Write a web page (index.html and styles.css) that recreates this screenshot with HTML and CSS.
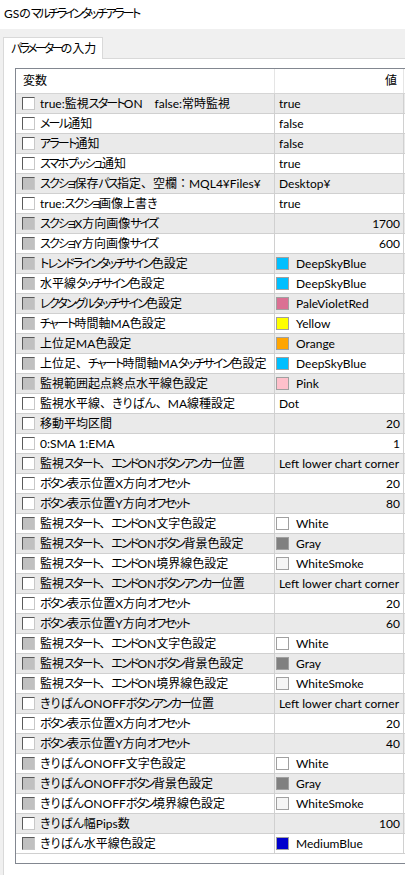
FILE: index.html
```html
<!DOCTYPE html>
<html lang="ja">
<head>
<meta charset="utf-8">
<title>GSのマルチラインタッチアラート</title>
<link rel="stylesheet" href="styles.css">
</head>
<body>
<div class="titlebar">GSの<span class="k">マルチラインタッチアラート</span></div>
<div class="tabstrip">
  <div class="tab"><span class="k">パラメーター</span>の入力</div>
  <div class="tabfill"></div>
</div>
<div class="panel">
  <div class="list">
    <div class="head">
      <div class="hname">変数</div>
      <div class="hval">値</div>
    </div>
    <div class="row odd"><div class="name"><span class="cb"></span><span class="lbl">true:監視<span class="k">スタート</span>ON　false:常時監視</span></div><div class="val">true</div></div>
    <div class="row"><div class="name"><span class="cb"></span><span class="lbl"><span class="k">メール</span>通知</span></div><div class="val">false</div></div>
    <div class="row odd"><div class="name"><span class="cb"></span><span class="lbl"><span class="k">アラート</span>通知</span></div><div class="val">false</div></div>
    <div class="row"><div class="name"><span class="cb"></span><span class="lbl"><span class="k">スマホプッシュ</span>通知</span></div><div class="val">true</div></div>
    <div class="row odd"><div class="name"><span class="cb g"></span><span class="lbl"><span class="k">スクショ</span>保存<span class="k">パス</span>指定<span class="fw">、</span>空欄<span class="fw">：</span>MQL4¥Files¥</span></div><div class="val">Desktop¥</div></div>
    <div class="row"><div class="name"><span class="cb"></span><span class="lbl">true:<span class="k">スクショ</span>画像上書き</span></div><div class="val">true</div></div>
    <div class="row odd"><div class="name"><span class="cb g"></span><span class="lbl"><span class="k">スクショ</span>X方向画像<span class="k">サイズ</span></span></div><div class="val num">1700</div></div>
    <div class="row"><div class="name"><span class="cb g"></span><span class="lbl"><span class="k">スクショ</span>Y方向画像<span class="k">サイズ</span></span></div><div class="val num">600</div></div>
    <div class="row odd"><div class="name"><span class="cb g"></span><span class="lbl"><span class="k">トレンドラインタッチサイン</span>色設定</span></div><div class="val"><span class="sw c-dsb"></span>DeepSkyBlue</div></div>
    <div class="row"><div class="name"><span class="cb g"></span><span class="lbl">水平線<span class="k">タッチサイン</span>色設定</span></div><div class="val"><span class="sw c-dsb"></span>DeepSkyBlue</div></div>
    <div class="row odd"><div class="name"><span class="cb g"></span><span class="lbl"><span class="k">レクタングルタッチサイン</span>色設定</span></div><div class="val"><span class="sw c-pvr"></span>PaleVioletRed</div></div>
    <div class="row"><div class="name"><span class="cb g"></span><span class="lbl"><span class="k">チャート</span>時間軸MA色設定</span></div><div class="val"><span class="sw c-yel"></span>Yellow</div></div>
    <div class="row odd"><div class="name"><span class="cb g"></span><span class="lbl">上位足MA色設定</span></div><div class="val"><span class="sw c-org"></span>Orange</div></div>
    <div class="row"><div class="name"><span class="cb g"></span><span class="lbl">上位足<span class="fw">、</span><span class="k">チャート</span>時間軸MA<span class="k">タッチサイン</span>色設定</span></div><div class="val"><span class="sw c-dsb"></span>DeepSkyBlue</div></div>
    <div class="row odd"><div class="name"><span class="cb g"></span><span class="lbl">監視範囲起点終点水平線色設定</span></div><div class="val"><span class="sw c-pnk"></span>Pink</div></div>
    <div class="row"><div class="name"><span class="cb"></span><span class="lbl">監視水平線<span class="fw">、</span>きりばん<span class="fw">、</span>MA線種設定</span></div><div class="val">Dot</div></div>
    <div class="row odd"><div class="name"><span class="cb"></span><span class="lbl">移動平均区間</span></div><div class="val num">20</div></div>
    <div class="row"><div class="name"><span class="cb"></span><span class="lbl">0:SMA 1:EMA</span></div><div class="val num">1</div></div>
    <div class="row odd"><div class="name"><span class="cb"></span><span class="lbl">監視<span class="k">スタート</span><span class="fw">、</span><span class="k">エンド</span>ON<span class="k">ボタンアンカー</span>位置</span></div><div class="val">Left lower chart corner</div></div>
    <div class="row"><div class="name"><span class="cb"></span><span class="lbl"><span class="k">ボタン</span>表示位置X方向<span class="k">オフセット</span></span></div><div class="val num">20</div></div>
    <div class="row odd"><div class="name"><span class="cb"></span><span class="lbl"><span class="k">ボタン</span>表示位置Y方向<span class="k">オフセット</span></span></div><div class="val num">80</div></div>
    <div class="row"><div class="name"><span class="cb g"></span><span class="lbl">監視<span class="k">スタート</span><span class="fw">、</span><span class="k">エンド</span>ON文字色設定</span></div><div class="val"><span class="sw c-wht"></span>White</div></div>
    <div class="row odd"><div class="name"><span class="cb g"></span><span class="lbl">監視<span class="k">スタート</span><span class="fw">、</span><span class="k">エンド</span>ON<span class="k">ボタン</span>背景色設定</span></div><div class="val"><span class="sw c-gry"></span>Gray</div></div>
    <div class="row"><div class="name"><span class="cb g"></span><span class="lbl">監視<span class="k">スタート</span><span class="fw">、</span><span class="k">エンド</span>ON境界線色設定</span></div><div class="val"><span class="sw c-ws"></span>WhiteSmoke</div></div>
    <div class="row odd"><div class="name"><span class="cb"></span><span class="lbl">監視<span class="k">スタート</span><span class="fw">、</span><span class="k">エンド</span>ON<span class="k">ボタンアンカー</span>位置</span></div><div class="val">Left lower chart corner</div></div>
    <div class="row"><div class="name"><span class="cb"></span><span class="lbl"><span class="k">ボタン</span>表示位置X方向<span class="k">オフセット</span></span></div><div class="val num">20</div></div>
    <div class="row odd"><div class="name"><span class="cb"></span><span class="lbl"><span class="k">ボタン</span>表示位置Y方向<span class="k">オフセット</span></span></div><div class="val num">60</div></div>
    <div class="row"><div class="name"><span class="cb g"></span><span class="lbl">監視<span class="k">スタート</span><span class="fw">、</span><span class="k">エンド</span>ON文字色設定</span></div><div class="val"><span class="sw c-wht"></span>White</div></div>
    <div class="row odd"><div class="name"><span class="cb g"></span><span class="lbl">監視<span class="k">スタート</span><span class="fw">、</span><span class="k">エンド</span>ON<span class="k">ボタン</span>背景色設定</span></div><div class="val"><span class="sw c-gry"></span>Gray</div></div>
    <div class="row"><div class="name"><span class="cb g"></span><span class="lbl">監視<span class="k">スタート</span><span class="fw">、</span><span class="k">エンド</span>ON境界線色設定</span></div><div class="val"><span class="sw c-ws"></span>WhiteSmoke</div></div>
    <div class="row odd"><div class="name"><span class="cb"></span><span class="lbl">きりばんONOFF<span class="k">ボタンアンカー</span>位置</span></div><div class="val">Left lower chart corner</div></div>
    <div class="row"><div class="name"><span class="cb"></span><span class="lbl"><span class="k">ボタン</span>表示位置X方向<span class="k">オフセット</span></span></div><div class="val num">20</div></div>
    <div class="row odd"><div class="name"><span class="cb"></span><span class="lbl"><span class="k">ボタン</span>表示位置Y方向<span class="k">オフセット</span></span></div><div class="val num">40</div></div>
    <div class="row"><div class="name"><span class="cb g"></span><span class="lbl">きりばんONOFF文字色設定</span></div><div class="val"><span class="sw c-wht"></span>White</div></div>
    <div class="row odd"><div class="name"><span class="cb g"></span><span class="lbl">きりばんONOFF<span class="k">ボタン</span>背景色設定</span></div><div class="val"><span class="sw c-gry"></span>Gray</div></div>
    <div class="row"><div class="name"><span class="cb g"></span><span class="lbl">きりばんONOFF<span class="k">ボタン</span>境界線色設定</span></div><div class="val"><span class="sw c-ws"></span>WhiteSmoke</div></div>
    <div class="row odd"><div class="name"><span class="cb"></span><span class="lbl">きりばん幅Pips数</span></div><div class="val num">100</div></div>
    <div class="row"><div class="name"><span class="cb g"></span><span class="lbl">きりばん水平線色設定</span></div><div class="val"><span class="sw c-mb"></span>MediumBlue</div></div>
    <div class="spacer"></div>
  </div>
</div>
</body>
</html>
```
FILE: styles.css
```css
html, body {
  margin: 0;
  padding: 0;
}
body {
  width: 405px;
  height: 875px;
  overflow: hidden;
  background: #f0f0f0;
  font-family: Lato, "Noto Sans CJK JP", sans-serif;
  font-size: 12px;
  font-feature-settings: "palt";
  color: #000;
}
.k {
  letter-spacing: -1.8px;
}
.fw {
  font-feature-settings: normal;
}
.titlebar {
  height: 29px;
  line-height: 28px;
  background: #fff;
  padding-left: 4px;
  white-space: nowrap;
}
.titlebar .k {
  letter-spacing: -2.3px;
}
.tabstrip {
  display: flex;
  padding-top: 8px;
  padding-left: 3px;
  height: 22px;
}
.tab {
  width: 100px;
  height: 22px;
  line-height: 22px;
  background: #fff;
  border: 1px solid #d9d9d9;
  border-bottom: none;
  padding-left: 7px;
  box-sizing: border-box;
  white-space: nowrap;
}
.tab .k {
  letter-spacing: -2.7px;
}
.tabfill {
  flex: 1;
  border-bottom: 1px solid #d9d9d9;
}
.panel {
  margin-left: 3px;
  border-left: 1px solid #d9d9d9;
  background: #fff;
  padding: 9px 0 0 11px;
  height: 820px;
  overflow: hidden;
}
.list {
  width: 420px;
  border: 1px solid #828790;
  background: #fff;
}
.head {
  display: flex;
  height: 24px;
  border-bottom: 1px solid #d5d5d5;
  line-height: 24px;
}
.hname {
  width: 251px;
  padding-left: 7px;
  border-right: 1px solid #e5e5e5;
}
.hval {
  width: 122px;
  padding-right: 6px;
  text-align: right;
  border-right: 1px solid #e5e5e5;
}
.row {
  display: flex;
  height: 19px;
  line-height: 19px;
  border-bottom: 1px solid #d0d0d0;
  white-space: nowrap;
}
.row.odd {
  background: #eaeaea;
}
.name {
  width: 258px;
  display: flex;
  align-items: center;
  border-right: 1px solid #d0d0d0;
  overflow: hidden;
}
.cb {
  width: 13px;
  height: 13px;
  box-sizing: border-box;
  margin-left: 6px;
  margin-right: 5px;
  background: #fff;
  border: 1px solid;
  border-color: #5a5a5a #c8c8c8 #c8c8c8 #5a5a5a;
  flex: none;
}
.cb.g {
  background: #c0c0c0;
}
.val {
  width: 121px;
  padding: 0 3px 0 4px;
  display: flex;
  align-items: center;
  border-right: 1px solid #d0d0d0;
  overflow: hidden;
}
.val.num {
  justify-content: flex-end;
}
.sw {
  width: 13px;
  height: 13px;
  box-sizing: border-box;
  border: 1px solid #a0a0a0;
  margin-left: -3px;
  margin-right: 7px;
  flex: none;
}
.c-dsb { background: #00bfff; }
.c-pvr { background: #db7093; }
.c-yel { background: #ffff00; }
.c-org { background: #ffa500; }
.c-pnk { background: #ffc0cb; }
.c-wht { background: #ffffff; }
.c-gry { background: #808080; }
.c-ws  { background: #f5f5f5; }
.c-mb  { background: #0000cd; }
.spacer {
  height: 9px;
}
```
